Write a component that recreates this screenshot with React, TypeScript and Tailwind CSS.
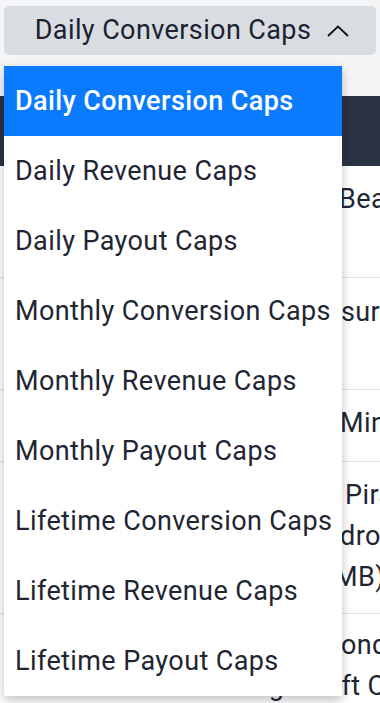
import { useState } from "react";

const options = [
  "Daily Conversion Caps",
  "Daily Revenue Caps",
  "Daily Payout Caps",
  "Monthly Conversion Caps",
  "Monthly Revenue Caps",
  "Monthly Payout Caps",
  "Lifetime Conversion Caps",
  "Lifetime Revenue Caps",
  "Lifetime Payout Caps",
];

// offer names in the table under the menu; `skip` is the part hidden by the menu
const rows = [
  { lines: [{ skip: 112, text: "Beats Solo3" }], cls: "h-[112px] pt-[13px]" },
  { lines: [{ skip: 114, text: "surance Quotes" }], cls: "h-[112px] pt-[14px]" },
  { lines: [{ skip: 113, text: "Minecraft" }], cls: "h-[72px] pt-[13px]" },
  {
    lines: [
      { skip: 118, text: "Pirates of the Sea" },
      { skip: 113, text: "droid" },
      { skip: 107, text: "MB)" },
    ],
    cls: "h-[152px] pt-[13px]",
  },
  {
    lines: [
      { skip: 114, text: "ond" },
      { skip: 0, text: "Burger Gift Card" },
    ],
    cls: "h-[120px] pt-[11px]",
  },
];

export default function App() {
  const [selected, setSelected] = useState(0);
  const [open, setOpen] = useState(true);

  return (
    <div className="relative h-[703px] w-[380px] overflow-hidden bg-[#f4f5f7] font-['Roboto',sans-serif] tracking-[0.4px] text-[#1f2633]">
      <div className="px-1 pt-1.5">
        <button
          onClick={() => setOpen((o) => !o)}
          className="flex h-[49px] w-full items-center justify-center gap-4 rounded-[5px] bg-[#d9dde2] pl-1 text-[27px] text-[#1c2230]"
        >
          <span>{options[selected]}</span>
          <svg width="22" height="12" viewBox="0 0 22 12" fill="none">
            <path d="M1 11 L11 1.5 L21 11" stroke="#111" strokeWidth="1.8" />
          </svg>
        </button>
      </div>

      {/* table behind the menu */}
      <div className="mt-[41px] w-full">
        <div className="h-[70px] bg-[#2a3344]" />
        <div className="bg-white">
          {rows.map((r, i) => (
            <div
              key={i}
              className={`border-b border-[#e1e4e8] pl-[227px] text-[27px] leading-[41px] whitespace-nowrap ${r.cls}`}
            >
              {r.lines.map((l, j) => (
                <div key={j} className="flex">
                  <span className="shrink-0" style={{ width: l.skip }} />
                  <span>{l.text}</span>
                </div>
              ))}
            </div>
          ))}
        </div>
      </div>

      {open && (
        <ul className="absolute left-1 top-[66px] w-[338px] bg-white shadow-[0_4px_10px_rgba(0,0,0,0.25)]">
          {options.map((o, i) => (
            <li
              key={o}
              onClick={() => {
                setSelected(i);
                setOpen(false);
              }}
              className={`flex h-[70px] cursor-pointer items-center whitespace-nowrap pl-[11px] text-[27px] ${
                i === selected ? "bg-[#0a7aff] font-medium text-white" : "text-[#1f2633]"
              }`}
            >
              {o}
            </li>
          ))}
        </ul>
      )}
    </div>
  );
}
